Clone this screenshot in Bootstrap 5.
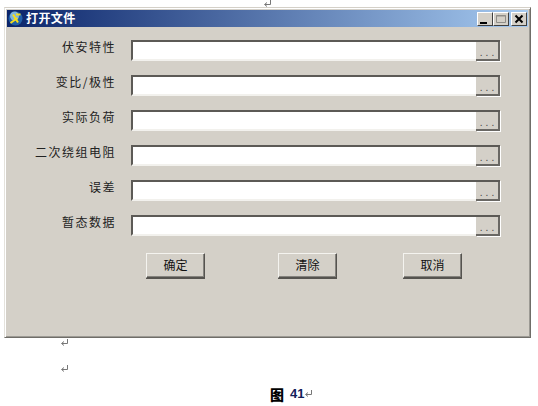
<!DOCTYPE html>
<html lang="zh-CN">
<head>
  <meta charset="UTF-8">
  <title>打开文件</title>
  <link href="https://cdn.jsdelivr.net/npm/bootstrap@5.3.0/dist/css/bootstrap.min.css" rel="stylesheet">
  <style>
    body {
      background: #fff;
      font-family: "Noto Sans CJK SC", "Liberation Sans", sans-serif;
      width: 538px;
      height: 406px;
      overflow: hidden;
    }
    .ret-mark { display: block; width: 9px; height: 8px; }
    .top-mark { height: 7px; padding-left: 263px; }
    .win {
      width: 527px;
      height: 331px;
      margin-left: 4px;
      background: #d4d0c8;
      border: 1px solid;
      border-color: #d4d0c8 #6f6d68 #6f6d68 #e4e2dc;
      box-shadow: inset 1px 1px 0 #fff, inset -1px -1px 0 #9c9a94;
      padding: 2px;
    }
    .title-bar {
      height: 17px;
      background: linear-gradient(90deg, #0a246a, #a6caf0);
      color: #fff;
      font-size: 12px;
      letter-spacing: .4px;
      font-weight: 700;
      padding: 0 1px 0 1px;
    }
    .title-text { margin-top: -2px; }
    .app-icon { margin-right: 3px; }
    .win-btn {
      width: 16px;
      height: 14px;
      background: #d4d0c8;
      border: 1px solid;
      border-color: #fff #404040 #404040 #fff;
      padding: 0;
      display: block;
    }
    .win-btn svg { display: block; width: 14px; height: 12px; }
    .win-close { margin-left: 2px; }
    .form-area { padding-top: 13px; }
    .field-row { height: 21px; margin-bottom: 14px; }
    .field-label {
      width: 109px;
      margin-right: 15px;
      text-align: right;
      font-size: 12px;
      letter-spacing: 1.5px;
      color: #222;
      line-height: 13px;
    }
    .path-box {
      width: 345px;
      height: 21px;
      background: #fff;
      border: 2px solid;
      border-color: #5c5a56 #f2f1ed #f2f1ed #5c5a56;
      border-right: 0;
    }
    .browse-btn {
      width: 24px;
      height: 21px;
      background: #d4d0c8;
      border: 0;
      border-top: 2px solid #5c5a56;
      box-shadow: inset -2px -2px 0 #6a6864, 1px 1px 0 #fff;
      padding: 3px 0 0 1px;
      font-size: 10px;
      letter-spacing: 3px;
      line-height: 1;
      color: #444;
      font-family: "Liberation Sans", sans-serif;
    }
    .action-row { padding-top: 3px; padding-left: 139px; }
    .action-btn {
      width: 59px;
      height: 25px;
      background: #d4d0c8;
      border: 1px solid;
      border-color: #f4f3ef #55534f #55534f #f4f3ef;
      box-shadow: inset -1px -1px 0 #85837e, 0 1px 0 #55534f;
      padding: 0 0 2px 0;
      font-size: 12px;
      color: #111;
    }
    .gap-a { margin-left: 73px; }
    .gap-b { margin-left: 66px; }
    .below-win { padding-left: 60px; padding-top: 1px; }
    .below-win .ret-mark { margin-bottom: 18px; }
    .caption {
      margin-top: -6px;
      padding-left: 270px;
      color: #000;
      font-size: 14px;
      line-height: 18px;
      font-weight: 900;
    }
    .caption b { color: #12205a; font-family: "Liberation Sans", sans-serif; font-size: 13px; margin-left: 6px; }
  </style>
</head>
<body>

<div class="top-mark">
  <svg class="ret-mark" viewBox="0 0 9 8"><path d="M7.500 0v4.500H2M4 2.500 1.500 4.500 4 6.500" fill="none" stroke="#777" stroke-width="1"/></svg>
</div>

<div class="win">
  <div class="title-bar d-flex align-items-center">
    <svg width="15" height="15" viewBox="0 0 15 15" class="app-icon flex-shrink-0">
      <circle cx="7.500" cy="7.500" r="7" fill="#1f5fa8"/>
      <circle cx="6.500" cy="5" r="4.500" fill="#9fd2ee" opacity=".75"/>
      <path d="M2.500 12 9.500 7M5 3.500l5 8M8 3.500h4.500" fill="none" stroke="#f4dc1c" stroke-width="2"/>
    </svg>
    <span class="title-text">打开文件</span>
    <div class="ms-auto d-flex">
      <button class="win-btn" type="button"><svg viewBox="0 0 14 12"><path d="M2 10h7" stroke="#000" stroke-width="2"/></svg></button>
      <button class="win-btn" type="button"><svg viewBox="0 0 14 12"><path d="M2.500 2.500h9v7h-9z M2 3h10" fill="none" stroke="#8f8d88"/></svg></button>
      <button class="win-btn win-close" type="button"><svg viewBox="0 0 14 12"><path d="M3.500 2.500l7 7M10.500 2.500l-7 7" stroke="#000" stroke-width="2"/></svg></button>
    </div>
  </div>

  <div class="form-area">
    <div class="field-row d-flex">
      <div class="field-label">伏安特性</div><div class="path-box"></div><button class="browse-btn" type="button">...</button>
    </div>
    <div class="field-row d-flex">
      <div class="field-label">变比/极性</div><div class="path-box"></div><button class="browse-btn" type="button">...</button>
    </div>
    <div class="field-row d-flex">
      <div class="field-label">实际负荷</div><div class="path-box"></div><button class="browse-btn" type="button">...</button>
    </div>
    <div class="field-row d-flex">
      <div class="field-label">二次绕组电阻</div><div class="path-box"></div><button class="browse-btn" type="button">...</button>
    </div>
    <div class="field-row d-flex">
      <div class="field-label">误差</div><div class="path-box"></div><button class="browse-btn" type="button">...</button>
    </div>
    <div class="field-row d-flex">
      <div class="field-label">暂态数据</div><div class="path-box"></div><button class="browse-btn" type="button">...</button>
    </div>
    <div class="action-row d-flex">
      <button class="action-btn" type="button">确定</button>
      <button class="action-btn gap-a" type="button">清除</button>
      <button class="action-btn gap-b" type="button">取消</button>
    </div>
  </div>
</div>

<div class="below-win">
  <svg class="ret-mark" viewBox="0 0 9 8"><path d="M7.500 0v4.500H2M4 2.500 1.500 4.500 4 6.500" fill="none" stroke="#777" stroke-width="1"/></svg>
  <svg class="ret-mark" viewBox="0 0 9 8"><path d="M7.500 0v4.500H2M4 2.500 1.500 4.500 4 6.500" fill="none" stroke="#777" stroke-width="1"/></svg>
</div>

<div class="caption d-flex align-items-center">
  <span>图</span><b>41</b>
  <svg class="ret-mark" viewBox="0 0 9 8"><path d="M7.500 0v4.500H2M4 2.500 1.500 4.500 4 6.500" fill="none" stroke="#777" stroke-width="1"/></svg>
</div>

<script src="https://cdn.jsdelivr.net/npm/bootstrap@5.3.0/dist/js/bootstrap.bundle.min.js"></script>
</body>
</html>
